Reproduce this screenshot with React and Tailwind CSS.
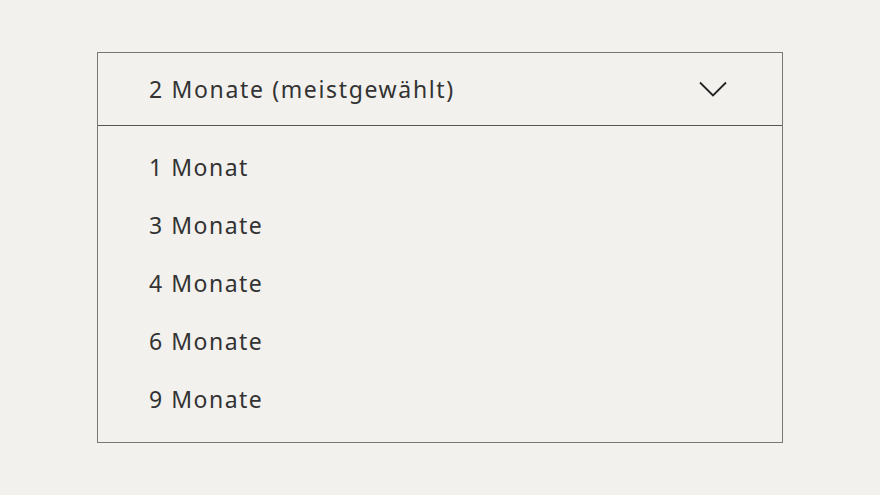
export default function App() {
  const options = ['1 Monat', '3 Monate', '4 Monate', '6 Monate', '9 Monate'];

  return (
    <div className="min-h-[495px] w-full bg-[#f2f1ee] pt-[52px] pl-[97px]" style={{ fontFamily: '"Noto Sans", sans-serif' }}>
      <div className="w-[686px] border border-[#777] text-[#333]">
        <div className="flex h-[73px] items-center justify-between border-b border-[#555] pl-[51px] pr-[55px]">
          <span className="text-[23px] tracking-[1.65px]">2 Monate (meistgewählt)</span>
          <svg width="28" height="16" viewBox="0 0 28 16" fill="none" stroke="#222" strokeWidth="1.8">
            <path d="M1 1.5 L14 14.5 L27 1.5" />
          </svg>
        </div>
        <ul className="pt-3 pb-[14px]">
          {options.map((o) => (
            <li key={o} className="flex h-[58px] items-center pl-[51px] text-[23px] tracking-[1.5px]">
              {o}
            </li>
          ))}
        </ul>
      </div>
    </div>
  );
}
